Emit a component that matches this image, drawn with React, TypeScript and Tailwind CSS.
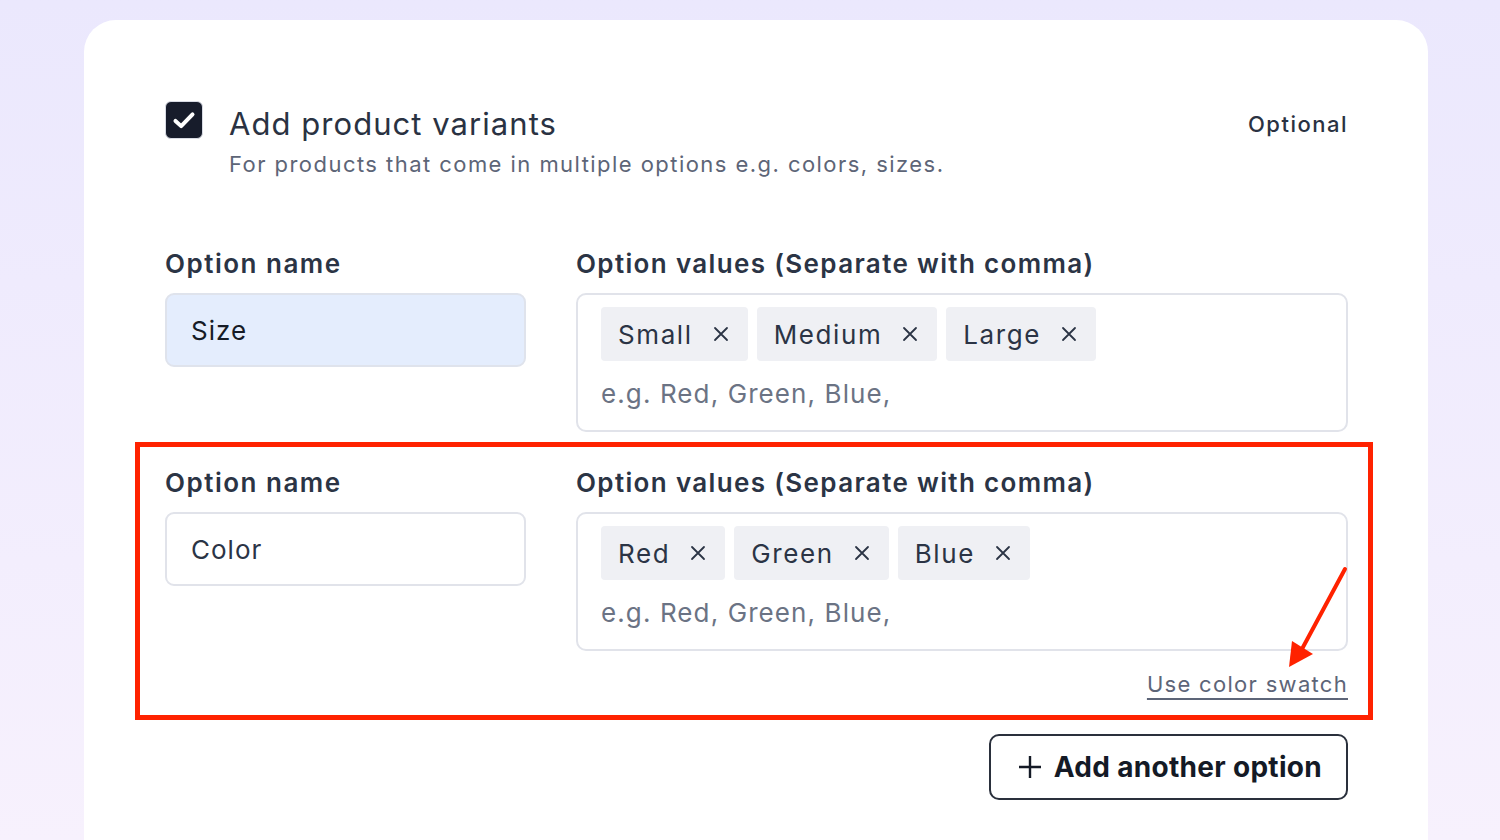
import React from "react";

const X = () => (
  <svg width="16" height="16" viewBox="0 0 16 16" className="shrink-0">
    <path d="M2 2L14 14M14 2L2 14" stroke="#2b3445" strokeWidth="1.8" strokeLinecap="round" />
  </svg>
);

const Chip = ({ label }: { label: string }) => (
  <div className="flex items-center h-[54px] pl-[17px] pr-[19px] gap-[20px] bg-[#eff0f4] rounded-[4px] text-[26px] text-[#2b3445] tracking-[1.6px]">
    <span>{label}</span>
    <X />
  </div>
);

const Row = ({ name, values, active }: { name: string; values: string[]; active?: boolean }) => (
  <div className="grid grid-cols-[361px_1fr] gap-x-[50px]">
    <div>
      <div className="text-[26px] leading-[32px] font-semibold text-[#2b3445] tracking-[1.5px]">Option name</div>
      <div
        className={
          "mt-[13px] h-[74px] rounded-[9px] border-2 flex items-center pl-[24px] text-[26px] tracking-[1px] " +
          (active ? "bg-[#e4edfd] border-[#dfe3ec] text-[#161b26]" : "bg-white border-[#e1e3ea] text-[#2b3445]")
        }
      >
        {name}
      </div>
    </div>
    <div>
      <div className="text-[26px] leading-[32px] font-semibold text-[#2b3445] tracking-[1.35px]">
        Option values (Separate with comma)
      </div>
      <div className="mt-[13px] rounded-[10px] border-2 border-[#e1e3ea] pt-[12px] pb-[20px] pl-[23px]">
        <div className="flex gap-[9px]">
          {values.map((v) => (
            <Chip key={v} label={v} />
          ))}
        </div>
        <div className="mt-[17px] text-[26px] leading-[32px] text-[#6b7384] tracking-[1.1px]">e.g. Red, Green, Blue,</div>
      </div>
    </div>
  </div>
);

export default function App() {
  return (
    <div
      className="w-full h-[840px] overflow-hidden bg-gradient-to-b from-[#ebe8fd] to-[#f7f1fd] pl-[84px] pr-[72px] pt-[20px]"
      style={{ fontFamily: "Inter, 'Noto Sans', sans-serif" }}
    >
      <div className="bg-white rounded-t-[32px] h-[900px] pl-[81px] pr-[80px] pt-[81px]">
        <div className="flex items-start">
          <div className="w-[38px] h-[38px] rounded-[6px] bg-[#171c2b] border border-[#d8dbe4] flex items-center justify-center shrink-0">
            <svg width="38" height="38" viewBox="0 0 38 38">
              <path d="M10 20L16 25.5L28 13" stroke="white" strokeWidth="4.2" fill="none" strokeLinecap="round" strokeLinejoin="round" />
            </svg>
          </div>
          <div className="ml-[26px] flex-1">
            <div className="text-[31px] leading-[44px] mt-[1px] text-[#2a3242] tracking-[1.05px]">Add product variants</div>
            <div className="text-[22px] leading-[30px] mt-[3px] text-[#5d6577] tracking-[1.45px]">
              For products that come in multiple options e.g. colors, sizes.
            </div>
          </div>
          <div className="text-[22px] leading-[44px] mt-[1px] font-medium text-[#2a3242] tracking-[1.5px]">Optional</div>
        </div>

        <div className="mt-[69px]">
          <Row name="Size" values={["Small", "Medium", "Large"]} active />
        </div>

        <div className="relative mt-[10px] -ml-[30px] -mr-[25px] border-[5px] border-[#ff2200] pl-[25px] pr-[20px] pt-[20px] pb-[17px]">
          <Row name="Color" values={["Red", "Green", "Blue"]} />
          <div className="flex justify-end mt-[19px]">
            <span className="text-[22px] leading-[28px] text-[#5d6578] underline underline-offset-[6px] decoration-[2px] tracking-[1.3px]">
              Use color swatch
            </span>
          </div>
          <svg className="absolute left-[1140px] top-[117px]" width="70" height="110" viewBox="0 0 70 110">
            <path d="M65 5L22 85" stroke="#ff2200" strokeWidth="4" strokeLinecap="round" />
            <path d="M9 103L12 77L33 90Z" fill="#ff2200" />
          </svg>
        </div>

        <div className="flex justify-end mt-[14px]">
          <button className="h-[66px] rounded-[10px] border-2 border-[#2a303c] flex items-center pl-[27px] pr-[24px] gap-[12px] bg-white">
            <svg width="24" height="24" viewBox="0 0 24 24">
              <path d="M12 1V23M1 12H23" stroke="#141a26" strokeWidth="2.4" />
            </svg>
            <span className="text-[28px] font-bold text-[#141a26] tracking-[0.3px]">Add another option</span>
          </button>
        </div>
      </div>
    </div>
  );
}
